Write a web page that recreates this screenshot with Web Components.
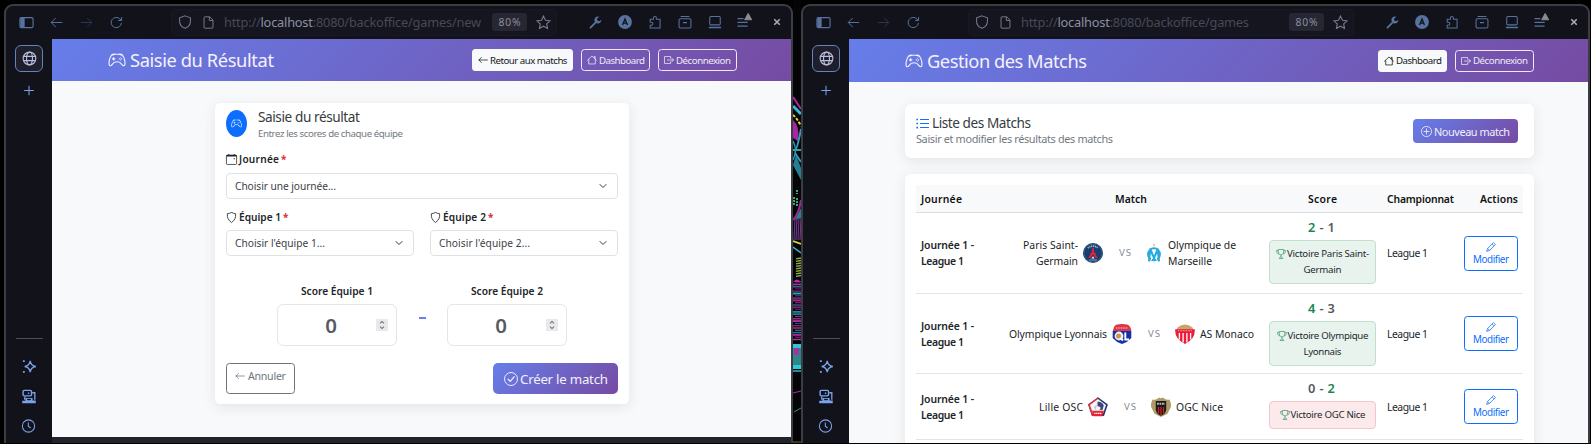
<!DOCTYPE html>
<html lang="fr">
<head>
<meta charset="utf-8">
<title>Backoffice – Matchs</title>
<style>
html,body{margin:0;height:444px;overflow:hidden;background:#000}
body{font-family:"Noto Sans",sans-serif;color:#212529}
</style>
</head>
<body>
<desk-top></desk-top>
<script>
const ICONS = {
controller:'<g fill="currentColor"><path d="M11.5 6.027a.5.5 0 1 1-1 0 .5.5 0 0 1 1 0m-1.5 1.5a.5.5 0 1 0 0-1 .5.5 0 0 0 0 1m2.5-.5a.5.5 0 1 1-1 0 .5.5 0 0 1 1 0m-1.5 1.5a.5.5 0 1 0 0-1 .5.5 0 0 0 0 1m-6.5-3h1v1h1v1h-1v1h-1v-1h-1v-1h1z"/><path d="M3.051 3.26a.5.5 0 0 1 .354-.613l1.932-.518a.5.5 0 0 1 .62.39c.655-.079 1.35-.117 2.043-.117.72 0 1.443.041 2.12.126a.5.5 0 0 1 .622-.399l1.932.518a.5.5 0 0 1 .306.729q.211.136.373.297c.408.408.78 1.05 1.095 1.772.32.733.599 1.591.805 2.466s.34 1.78.364 2.606c.024.816-.059 1.602-.328 2.21a1.42 1.42 0 0 1-1.445.83c-.636-.067-1.115-.394-1.513-.773-.245-.232-.496-.526-.739-.808-.126-.148-.25-.292-.368-.423-.728-.804-1.597-1.527-3.224-1.527s-2.496.723-3.224 1.527c-.119.131-.242.275-.368.423-.243.282-.494.575-.739.808-.398.38-.877.706-1.513.773a1.42 1.42 0 0 1-1.445-.83c-.27-.608-.352-1.395-.329-2.21.024-.826.16-1.73.365-2.606.206-.875.486-1.733.805-2.466.315-.722.687-1.364 1.094-1.772a2.3 2.3 0 0 1 .433-.335l-.028-.079zm2.036.412c-.877.185-1.469.443-1.733.708-.276.276-.587.783-.885 1.465a14 14 0 0 0-.748 2.295 12.4 12.4 0 0 0-.339 2.406c-.022.755.062 1.368.243 1.776a.42.42 0 0 0 .426.24c.327-.034.61-.199.929-.502.212-.202.4-.423.615-.674.133-.156.276-.323.44-.504C4.861 9.969 5.978 9.027 8 9.027s3.139.942 3.965 1.855c.164.181.307.348.44.504.214.251.403.472.615.674.318.303.601.468.929.503a.42.42 0 0 0 .426-.241c.18-.408.265-1.02.243-1.776a12.4 12.4 0 0 0-.339-2.406 14 14 0 0 0-.748-2.295c-.298-.682-.61-1.19-.885-1.465-.264-.265-.856-.523-1.733-.708-.85-.179-1.877-.27-2.913-.27s-2.063.091-2.913.27"/></g>',
sidebar:'<rect x="1" y="2.8" width="14" height="10.6" rx="1.5"/><path d="M2 3.4h3.4v9.4H2z" fill="currentColor"/>',
back:'<path d="M15 8H1.5M7 2.5 1.5 8 7 13.5"/>',
fwd:'<path d="M1 8h13.5M9 2.5 14.5 8 9 13.5"/>',
reload:'<path d="M14 8.5A6.3 6.3 0 1 1 12.3 3.7L14 5.3M14.3 1.2v4.3H10"/>',
shield:'<path d="M8 1 14.2 3.2V7c0 4-2.7 6.8-6.2 8.2C4.500 13.800 1.800 11 1.800 7V3.200z"/>',
doc:'<path d="M3.500 1h6l4 4v9q0 1-1 1h-9q-1 0-1-1V2q0-1 1-1zM9 1v4.500h4.500"/>',
star:'<path d="M8 1.200l2.100 4.400 4.800.6-3.500 3.300.9 4.800L8 12l-4.300 2.300.9-4.800L1.100 6.200l4.800-.6z"/>',
wrench:'<path d="M1.800 14.300 9.200 7" stroke-width="2.300" stroke-linecap="round"/><path d="M12.700.9a4.300 4.300 0 1 0 2.500 3.600L12.800 6.600 10.200 5.600 9.900 3.300z" fill="currentColor" stroke="none"/>',
account:'<circle cx="8" cy="8" r="7.900" fill="currentColor" stroke="none"/><path d="M5.200 11.500 8 4.500 10.800 11.500M6.200 9.200h3.600" stroke="#11121a" stroke-width="1.500"/>',
puzzle:'<path d="M2.500 4.800h3.700V3.300a1.700 1.700 0 0 1 3.400 0v1.500h4.200v10H2.500v-3h1.300a1.700 1.700 0 0 0 0-3.500H2.500z"/>',
archive:'<path d="M3 1.700h10" /><rect x="1.200" y="4.200" width="13.600" height="10.600" rx="1.600"/><path d="M5.700 8.700h4.600"/>',
laptop:'<rect x="2" y="1.800" width="12" height="9.500" rx="1.200"/><path d="M1 14.300h14" stroke-width="1.500"/>',
menu:'<path d="M-2 3.500H6M-2 8.500h13.500M-2 13.500h13.500" stroke-width="1.500"/><path d="M11.200-3.500 16 5H6.500z" fill="#8d8d92" stroke="#8d8d92" stroke-linejoin="round" transform="translate(1 0)"/>',
close:'<path d="M2.500 2.500 13.500 13.500M13.500 2.500 2.500 13.500" stroke-width="3.200"/>',
globe:'<circle cx="8" cy="8" r="6.800"/><ellipse cx="8" cy="8" rx="3.200" ry="6.800"/><path d="M1.500 5.700h13M1.500 10.300h13"/>',
plus:'<path d="M8 1v14M1 8h14" stroke-width="1.500"/>',
sparkle:'<path d="M9.300 2Q10 7.300 15.300 8 10 8.800 9.300 14 8.500 8.800 3.400 8 8.500 7.300 9.300 2z" stroke-width="1.400"/><path d="M1.500 1.200h2v2h-2zM1.500 12.700h2v2h-2z" fill="currentColor" stroke="none"/>',
devices:'<rect x="1.700" y="1.500" width="9" height="5.800" rx="1.200" stroke-width="1.500"/><path d="M7.500 3.700v1.500M11.500 4h2.700v7.500M3.500 8v3.500" stroke-width="1.400"/><path d="M4.200 9.500h7.600v2.800H15.200V15.300H.8v-2.800h3.400z" fill="currentColor" stroke="none"/><path d="M6 11.200h4" stroke="#11121a" stroke-width="1.500"/>',
clock:'<circle cx="8" cy="8" r="7"/><path d="M7.800 4v4.300l2.700 2"/>',
arrow:'<path d="M15 8H1.500M5.300 4 1.500 8l3.800 4" stroke-linecap="round" stroke-linejoin="round"/>',
house:'<path d="M.9 8.300 8 1.500l7.100 6.800M2.700 7v7.300h10.600V7M11.500 4.500V2.300h1.500V6" stroke-linejoin="round" stroke-linecap="round"/>',
logout:'<path d="M10.500 5V2.500H.8v11h9.700V11M5.500 8h9.700M12.300 5l3 3-3 3" stroke-linejoin="round" stroke-linecap="round"/>',
calendar:'<rect x=".6" y="1.600" width="14.800" height="13.600" rx="1.300"/><path d="M.6 2.500h14.800" stroke-width="2"/><path d="M4 0v2M12 0v2" stroke-width="1.300"/><path d="M11 6h1.800v1.600H11z" fill="currentColor" stroke="none"/>',
badge:'<path d="M8 .7Q11 2.200 14 2.500 15 10.500 8 15.300 1 10.500 2 2.500 5 2.200 8 .7z" stroke-width="1.200"/>',
chevron:'<path d="m2 5 6 6 6-6" stroke-linecap="round" stroke-linejoin="round" stroke-width="2"/>',
check:'<circle cx="8" cy="8" r="7.400"/><path d="m4.800 8.200 2.400 2.500 4.300-5.200" stroke-width="1.500" stroke-linecap="round"/>',
add:'<circle cx="8" cy="8" r="7.400"/><path d="M8 4.200v7.600M4.200 8h7.600" stroke-linecap="round"/>',
list:'<path d="M5 3h11M5 8h11M5 13h11" stroke-width="1.300"/><path d="M.5 3h2M.5 8h2M.5 13h2" stroke-width="2"/>',
trophy:'<path d="M3.500.8h9c0 5-1 8.700-4.500 8.700S3.500 5.800 3.500.8zM3.500 2.500H.8c0 3 1.200 5 3.800 5.500M12.500 2.500h2.700c0 3-1.200 5-3.800 5.500M8 9.500v3M5 15.200c0-1.500 1.500-2 3-2.700 1.500.7 3 1.200 3 2.700z"/>',
pencil:'<path d="M12 .9 15.100 4 5.500 13.600 1 15l1.400-4.500zM9.800 3.200l3 3M3 10.500l2.500 2.700" stroke-linejoin="round"/>',
spin:'<path d="m4.700 5.500 3.300-3 3.300 3M4.700 10.500l3.300 3 3.300-3" stroke-width="1.700"/>'
};
const LOGOS = {
psg:'<circle cx="10" cy="10" r="10" fill="#163f70"/><circle cx="10" cy="10" r="9" fill="none" stroke="#6f87a5" stroke-width=".4"/><path d="M4.800 5.200Q10 1 15.200 5.200" stroke="#a9b8cb" stroke-width="1.600" fill="none" stroke-dasharray="1.200 .7"/><path d="M9.300 5h1.400l.5 4.500 3.600 5.500h-2.500L10 11.200 7.700 15H5.200l3.600-5.500z" fill="#e5223a"/><path d="M7 10.500h6" stroke="#e5223a" stroke-width=".9"/><path d="M8.500 15.500 10 13.300l1.500 2.200z" fill="#fff"/><path d="M6 17h8" stroke="#a9b8cb" stroke-width=".8"/>',
om:'<path d="M10 .8v2.600M9.200 1.800h1.600" stroke="#d9b36b" stroke-width=".9"/><circle cx="10" cy="11.300" r="6" fill="none" stroke="#2aa9e0" stroke-width="1.900"/><path d="M6.300 5.500 5 18.300M13.700 5.500 15 18.300M6.800 7 10 15.500 13.200 7" fill="none" stroke="#2aa9e0" stroke-width="2.100"/><path d="M8 13.500 7.300 17M12 13.500 12.700 17" stroke="#fff" stroke-width="1.100"/>',
ol:'<path d="M.8 7Q1 3 4 .8q6-1.600 12 0Q19.200 3 19.300 7z" fill="#dc3648"/><path d="M4 4h12" stroke="#f5a5ac" stroke-width="1.300" stroke-dasharray="1 .7"/><path d="M.7 7h18.600v7Q16 18 10 20 4 18 .7 14z" fill="#1531a6"/><circle cx="7" cy="12" r="4.400" fill="#eef0f6"/><circle cx="6.500" cy="12" r="2.500" fill="#c9964a"/><path d="M8.500 14 11 16.500M13.300 8.500v7H17" stroke="#fff" stroke-width="1.900" fill="none"/>',
asm:'<path d="M2.500 3.500Q10-2.500 17.500 3.500L18.500 6H1.500z" fill="#c7a569"/><path d="M.2 5.300h19.600Q20.500 15 10 20-.5 15 .2 5.300z" fill="#ed1c3c"/><path d="M4.400 9v6.500M8.100 9v9.500M11.900 9v9.500M15.600 9v6.500" stroke="#fff" stroke-width="1.300"/><path d="M3 6.800h14" stroke="#f6a4ae" stroke-width="1.100" stroke-dasharray="1 .6"/>',
losc:'<path d="M10 .2 19.900 7.500 16 19H4L.1 7.500z" fill="#27306f"/><path d="M10 .2.1 7.500 4 19h5z" fill="#db2e3f"/><path d="M10 2 18 8 15.300 16H4.700L2 8z" fill="#f5f5f8"/><path d="M9.500 4.800Q13.500 4 15.800 8.300L14.500 13 11.300 12.800q1.700-1 1.200-2.500L9.500 9z" fill="#3b447f"/><path d="M6 10 9 7.500 8 12.500H7z" fill="#c3c8d7"/><path d="M4 13.700h12l-1.500 5.500h-9z" fill="#e42435"/><path d="M6.300 16.300h7.500" stroke="#fff" stroke-width="1.300" stroke-dasharray="1.300 .5"/>',
nice:'<path d="M1.500 2.500Q5 3.500 8 .5l2 .8 2-.8q3 3 6.500 2 2.800 6 .5 9.300l-2.500 5L10 20l-6.500-3.200-2.500-5Q-1.300 8.500 1.500 2.500z" fill="#b09b68"/><path d="M4.800 4h10.400v9Q14.500 17 10 18.700 5.500 17 4.800 13z" fill="#1b1919"/><path d="M7.500 10v6.500M10 10v8M12.500 10v6.500" stroke="#cc2030" stroke-width="1.300"/><path d="M6 6.800h8" stroke="#bcbcbc" stroke-width="2" stroke-dasharray="1.800 .7"/>'
};
class Base extends HTMLElement{
  connectedCallback(){ if(this.shadowRoot) return;
    this.attachShadow({mode:'open'}).innerHTML = `<style>*{box-sizing:border-box}${this.css()}</style>${this.html()}`; }
  a(n,d=''){ return this.getAttribute(n) ?? d; }
}
const def=(n,c)=>customElements.define(n,c);

def('ui-icon', class extends Base{
  css(){return `:host{display:block;flex:none;width:${this.a('size',14)}px;height:${this.a('size',14)}px}svg{display:block;width:100%;height:100%;overflow:visible}`}
  html(){return `<svg viewBox="0 0 16 16" fill="none" stroke="currentColor" stroke-width="${this.a('sw',1.2)}">${ICONS[this.a('name')].replace('<g ','<g stroke="none" ')}</svg>`}
});
def('team-logo', class extends Base{
  css(){return `:host{display:block;flex:none;width:20px;height:20px}svg{display:block}`}
  html(){return `<svg width="20" height="20" viewBox="0 0 20 20">${LOGOS[this.a('team')]}</svg>`}
});
def('ui-btn', class extends Base{
  css(){return `:host{display:flex;flex:none;align-items:center;box-sizing:border-box;border:1px solid transparent;border-radius:3.500px;font-size:9.700px}
  :host([kind=light]){background:#f8f9fa;color:#14171a}
  :host([kind=outline]){border-color:#efeaf6;color:#efeaf6}
  :host([kind=primary]){border:0;border-radius:5px;background:linear-gradient(135deg,#667eea,#764ba2);color:#f3f0fa}
  :host([kind=gray]){border-color:#6c757d;color:#6c757d}
  :host([kind=blue]){border-color:#0d6efd;color:#0d6efd;flex-direction:column}`}
  html(){return '<slot></slot>'}
});
def('page-header', class extends Base{
  css(){return `:host{display:flex;align-items:center;height:${this.a('h')}px;background:linear-gradient(135deg,#667eea,#764ba2);color:#f3f2fc;padding-left:${this.a('pl')}px;padding-right:${this.a('pr')}px}
  .t{display:flex;align-items:center;font-size:18.300px;line-height:24px;gap:4px;flex:1}.b{display:flex;gap:8px}`}
  html(){return '<div class="t"><ui-icon name="controller" size="18"></ui-icon><slot name="title"></slot></div><div class="b"><slot></slot></div>'}
});
def('browser-window', class extends Base{
  css(){return `:host{display:grid;grid-template:33px 404px/46px 1fr;width:789px;height:439px;box-sizing:border-box;border:2px solid #3b3d43;border-bottom:0;border-radius:9px 9px 0 0;background:#11121a;overflow:hidden}
  .bar{grid-column:1/3;display:flex;align-items:center;padding:0 0 1px 5px;color:#58729f}
  .c{flex:none;width:30px;display:flex;justify-content:center}
  .url{flex:none;margin:0 23px 0 40px;width:386px;height:27px;border-radius:4px;background:#14151e;border:1px solid #181923;display:flex;align-items:center;color:#777a8c;padding-left:6px;font-size:12.800px}
  .url .p{margin-left:9px;flex:none;color:#474957}.url b{font-weight:400;color:#8d90a3}
  .z{width:35px;height:18px;border-radius:3px;background:#262732;color:#8b8ea0;font-size:10.300px;line-height:18px;display:flex;justify-content:center}
  .side{display:flex;flex-direction:column;align-items:center;color:#7ba2ea}.side>ui-icon{transform:translateX(-.5px)}
  .tile{width:28px;height:27px;margin-top:6px;border:1px solid #6283bd;border-radius:6px;background:#1e1f2b;color:#b9bede;display:flex;align-items:center;justify-content:center}
  .hr{width:27px;height:1px;background:#4b4e61;margin:242px 0 20px}
  .page{background:#f8f9fa;overflow:hidden;height:404px}`}
  html(){const i=(n,s,x='')=>`<span class="c" style="${x}"><ui-icon name="${n}" size="${s}"></ui-icon></span>`;
  return `<div class="bar">${i('sidebar',15)}${i('back',13)}${i('fwd',13,'color:#2b3650')}${i('reload',13)}
  <div class="url"><ui-icon name="shield" size="14"></ui-icon><ui-icon name="doc" size="13" style="margin-left:10px"></ui-icon><fit-text class="p" w="${this.a('urlw')}">http://<b>localhost</b>:8080${this.a('path')}</fit-text><span class="z" style="margin-left:auto"><fit-text w="22">80%</fit-text></span><ui-icon name="star" size="15" style="margin:0 5px 0 9px"></ui-icon></div>
  ${i('wrench',13)}${i('account',14)}${i('puzzle',14)}${i('archive',14)}${i('laptop',14)}${i('menu',12)}${i('close',8,'width:26px;margin-left:4px;color:#a9abba')}</div>
  <div class="side"><div class="tile"><ui-icon name="globe" size="15"></ui-icon></div><ui-icon name="plus" size="11" style="margin-top:13px"></ui-icon><div class="hr"></div><ui-icon name="sparkle" size="15"></ui-icon><ui-icon name="devices" size="15" style="margin:15px 0"></ui-icon><ui-icon name="clock" size="14"></ui-icon></div>
  <div class="page"><slot></slot></div>`}
});
def('wall-paper', class extends Base{
  css(){return `:host{display:block;width:8px;height:444px;background:#050507}svg{display:block}`}
  html(){
    let s='';
    const cols=['#a22a9b','#26758e','#2fa3c4','#7a2478','#35627e','#b030a4'];
    for(let y=282,k=0;y<340;y+=2.3,k++) s+=`<path d="M${k%3===0?2:0} ${y}H8" stroke="${cols[(k*5+(k>>2))%6]}" stroke-width="${.9+(k%3)*.5}"/>`;
    for(let y=258;y<276;y+=2.500) s+=`<path d="M3 ${y+.8}L8 ${y}" stroke="#8fae3f" stroke-width="1.300"/>`;
    for(let x=1;x<8;x+=2) s+=`<path d="M${x+1} 218L${x} 240" stroke="${x%4===1?'#5a3d8c':'#8b2d8c'}" stroke-width="1.200"/>`;
    return `<svg width="8" height="444" viewBox="0 0 8 444" fill="none">
    <path d="M0 97 8 109" stroke="#b12ba5" stroke-width="2"/><path d="M0 106 8 114" stroke="#35bcd3" stroke-width="3"/><path d="M0 115Q4 118 8 126" stroke="#e4df38" stroke-width="2" stroke-dasharray="3 1.500"/><path d="M0 120Q7 126 5 141L0 138z" fill="#a826a0"/><path d="M8 129Q4 150 2 150M0 150h8M2 153 8 162" stroke="#2f9fb8" stroke-width="2"/><path d="M0 141Q5 150 0 160" stroke="#279fb7" stroke-width="1.500"/><path d="M3 155 8 168V180L0 165z" fill="#247f95"/>
    <path d="M4 190v4M1 197v8M4 198v8" stroke="#3ba777" stroke-width="2" stroke-dasharray="2 1"/><path d="M8 200Q6 214 0 220" stroke="#a0299a" stroke-width="2"/><path d="M8 208V218L2 220z" fill="#2b8385"/>${s}
    <path d="M0 241l8 3" stroke="#d7d63b" stroke-width="1.800"/><path d="M0 247 8 253" stroke="#34b8ca" stroke-width="1.500"/><path d="M0 282Q4 277 8 282z" fill="#b62aae"/>
    <path d="M0 344h8v21H0z" fill="#2a8888"/><path d="M0 344h8v4H0zM0 365h8v4H0z" fill="#31c5da"/><path d="M1 348h5v7H1z" fill="#a233a0"/><path d="M0 371h8" stroke="#2ba9c0" stroke-width="1.600"/><path d="M0 393 8 391" stroke="#ad2ba6"/><path d="M1 412 8 408" stroke="#3e9172"/><path d="M0 442h8" stroke="#6b6b24"/></svg>`}
});
def('form-select', class extends Base{
  css(){return `:host{display:flex;align-items:center;justify-content:space-between;height:26px;box-sizing:border-box;border:1px solid #dee2e6;border-radius:4px;background:#fff;padding:0 10px 0 8px;font-size:10.200px;color:#3d4247}`}
  html(){return '<slot></slot><ui-icon name="chevron" size="8" style="color:#343a40"></ui-icon>'}
});
def('field-label', class extends Base{
  css(){return `:host{display:flex;align-items:center;height:16px;font-size:10.100px;font-weight:600;gap:2px}i{font-style:normal;font-weight:700;font-size:10px;color:#e0283c}`}
  html(){return `<ui-icon name="${this.a('icon')}" size="11" sw="1.100"></ui-icon><slot></slot><i>*</i>`}
});
def('score-field', class extends Base{
  css(){return `:host{display:block;width:120px}.l{display:flex;justify-content:center;font-size:10.200px;font-weight:600;line-height:16px;margin-bottom:5px}
  .b{height:42px;border:1px solid #e3e6ea;border-radius:6px;display:flex;align-items:center;padding-right:8px}.n{flex:1;text-align:center;font-size:20.500px;font-weight:600;color:#575b5f;line-height:40px;padding-left:8px}
  .s{width:12px;height:12px;background:#e9e9ed;color:#777;display:flex;align-items:center;justify-content:center;margin-top:-1px}`}
  html(){return `<div class="l"><fit-text w="72">${this.a('label')}</fit-text></div><div class="b"><span class="n">0</span><span class="s"><ui-icon name="spin" size="10"></ui-icon></span></div>`}
});
def('result-form', class extends Base{
  css(){return `:host{display:block;box-sizing:border-box;width:414px;height:301px;margin:22px 0 0 163px;padding:7px 11px 0;background:#fff;border-radius:5px;box-shadow:0 3px 14px rgba(0,0,0,.09)}
  .h{display:flex;height:39px}.o{width:21px;height:27px;border-radius:50%;background:#0d6efd;color:#dbe9ff;display:flex;align-items:center;justify-content:center;margin-right:11px}
  .t{font-size:13.600px;line-height:16px;color:#363b40;display:flex;margin-top:-1px}.u{font-size:9.700px;line-height:15px;color:#73797f;display:flex;margin-top:1px}
  .two{display:grid;grid-template-columns:1fr 1fr;gap:16px;margin-top:10px}
  form-select{margin-top:5px}
  .sc{display:flex;padding-left:51px;margin-top:27px}.d{width:50px;display:flex;justify-content:center;padding:34px 0 0}.d:after{content:"";width:7px;height:2px;background:#6b80ea}
  .f{display:flex;justify-content:space-between;margin-top:17px;height:31px}`}
  html(){return `<div class="h"><span class="o"><ui-icon name="controller" size="11"></ui-icon></span><div><div class="t"><fit-text w="102">Saisie du résultat</fit-text></div><div class="u"><fit-text w="145">Entrez les scores de chaque équipe</fit-text></div></div></div>
  <div style="height:2px"></div><field-label icon="calendar"><fit-text w="40">Journée</fit-text></field-label><form-select style="margin-top:6px"><fit-text w="101">Choisir une journée...</fit-text></form-select>
  <div class="two"><div><field-label icon="badge"><fit-text w="42">Équipe 1</fit-text></field-label><form-select><fit-text w="90">Choisir l'équipe 1...</fit-text></form-select></div><div><field-label icon="badge"><fit-text w="43">Équipe 2</fit-text></field-label><form-select><fit-text w="91">Choisir l'équipe 2...</fit-text></form-select></div></div>
  <div class="sc"><score-field label="Score Équipe 1"></score-field><div class="d"></div><score-field label="Score Équipe 2"></score-field></div>
  <div class="f"><ui-btn kind="gray" style="padding:0 8px 6px;width:69px;font-size:10.600px"><ui-icon name="arrow" size="10"></ui-icon><fit-text w="38" style="margin-left:3px">Annuler</fit-text></ui-btn>
  <ui-btn kind="primary" style="width:125px;padding-left:11px;font-size:13.300px"><ui-icon name="check" size="14" sw="1.100"></ui-icon><fit-text w="88" style="margin-left:2px">Créer le match</fit-text></ui-btn></div>`}
});
def('match-row', class extends Base{
  css(){return `:host{display:flex;box-sizing:border-box;height:${this.a('h')}px;border-bottom:1px solid #e1e4e8;font-size:10.400px;line-height:16px}
  .j{width:93px;padding-left:5px;font-weight:600;display:flex;flex-direction:column;justify-content:center}
  .m{width:260px;display:flex;align-items:center}.m .x{display:flex;flex-direction:column}.m .e{align-items:flex-end}
  .vs{font-size:9.700px;color:#868d94}
  .s{width:107px;padding-top:6px}.n{display:flex;justify-content:center;gap:4px;font-size:12.800px;line-height:17px;font-weight:600;color:#565b60;padding-right:2px}.w{color:#198754}
  .v{margin-top:4px;height:${this.a('vh')}px;border:1px solid #c1dfce;background:#e8f3ee;border-radius:4px;display:flex;flex-direction:column;align-items:center;justify-content:center;font-size:9.700px;color:#24292d}
  .v.r{background:#fbe9eb;border-color:#f4c5ca}.v div{display:flex;align-items:center;gap:1px}.v ui-icon{color:#3d9b6c}
  .l{width:88px;padding-left:11px;display:flex;align-items:center}.q{display:flex;align-items:center}`}
  html(){const d=MATCHES[this.a('i')],L=(ls)=>ls.map(([t,w])=>`<fit-text w="${w}">${t}</fit-text>`).join('');
  return `<div class="j"><fit-text w="53">Journée 1 -</fit-text><fit-text w="43">League 1</fit-text></div>
  <div class="m"><div class="x e" style="width:${d.aw}px">${L(d.a)}</div><team-logo team="${d.la}" style="margin-left:5px"></team-logo><fit-text class="vs" w="12" style="margin:0 ${d.vr}px 0 16px">VS</fit-text><team-logo team="${d.lb}"></team-logo><div class="x" style="margin-left:${d.bm}px">${L(d.b)}</div></div>
  <div class="s"><div class="n"><span class="${d.win?'':'w'}">${d.s[0]}</span><span>-</span><span class="${d.win?'w':''}">${d.s[1]}</span></div>
  <div class="v ${d.win?'r':''}"><div><ui-icon name="trophy" size="10"></ui-icon>${L([d.v[0]])}</div>${L(d.v.slice(1))}</div></div>
  <div class="l"><fit-text w="41">League 1</fit-text></div>
  <div class="q"><ui-btn kind="blue" style="width:54px;height:35px;padding-top:5px;font-size:9.900px"><ui-icon name="pencil" size="10"></ui-icon><fit-text w="36" style="line-height:13px;margin-top:1px">Modifier</fit-text></ui-btn></div>`}
});
const MATCHES=[
{a:[['Paris Saint-',55],['Germain',42]],aw:69,la:'psg',lb:'om',vr:13,bm:4,b:[['Olympique de',68],['Marseille',44]],s:[2,1],win:0,v:[['Victoire Paris Saint-',82],['Germain',38]]},
{a:[['Olympique Lyonnais',98]],aw:98,la:'ol',lb:'asm',vr:15,bm:5,b:[['AS Monaco',54]],s:[4,3],win:0,v:[['Victoire Olympique',81],['Lyonnais',38]]},
{a:[['Lille OSC',44]],aw:74,la:'losc',lb:'nice',vr:15,bm:5,b:[['OGC Nice',47]],s:[0,2],win:1,v:[['Victoire OGC Nice',75]]}];
def('match-list', class extends Base{
  css(){return `:host{display:block;padding:0 0 0 56px}.c{width:629px;background:#fff;border-radius:6px;box-shadow:0 3px 14px rgba(0,0,0,.085)}
  .a{height:54px;margin-top:22px;padding:11px 16px 0 11px;display:flex;justify-content:space-between}
  .t{display:flex;align-items:center;gap:3px;font-size:13.600px;line-height:16px;color:#363b40}.t ui-icon{color:#0d6efd}.u{font-size:10.900px;line-height:15px;color:#73797f;display:flex}
  .b{height:290px;margin-top:16px;padding:11px 11px 0}
  .th{height:28px;background:#f8f9fa;border-bottom:1px solid #d9dde2;display:flex;align-items:center;font-size:10.400px;font-weight:600;color:#111}`}
  html(){return `<div class="c a"><div><div class="t"><ui-icon name="list" size="13"></ui-icon><fit-text w="99">Liste des Matchs</fit-text></div><div class="u"><fit-text w="197">Saisir et modifier les résultats des matchs</fit-text></div></div>
  <ui-btn kind="primary" style="width:105px;height:24px;margin-top:4px;padding-left:8px;font-size:10.900px;border-radius:4px"><ui-icon name="add" size="11"></ui-icon><fit-text w="76" style="margin-left:2px">Nouveau match</fit-text></ui-btn></div>
  <div class="c b"><div class="th"><fit-text w="41" style="margin-left:5px">Journée</fit-text><fit-text w="32" style="margin-left:153px">Match</fit-text><fit-text w="29" style="margin-left:161px">Score</fit-text><fit-text w="67" style="margin-left:50px">Championnat</fit-text><fit-text w="38" style="margin-left:26px">Actions</fit-text></div>
  <match-row i="0" h="81" vh="44"></match-row><match-row i="1" h="80" vh="45"></match-row><match-row i="2" h="66" vh="28"></match-row></div>`}
});
def('desk-top', class extends Base{
  css(){return `:host{display:grid;grid-template-columns:789px 8px 789px;padding-left:4px;width:1591px;height:444px;box-sizing:border-box;background:#000;overflow:hidden}
  browser-window{margin-top:4px}.foot{height:6px;background:#212529;margin-top:33px}`}
  html(){const b=(k,ic,t,w,W)=>`<ui-btn kind="${k}" style="width:${W}px;height:22px;padding-left:5px"><ui-icon name="${ic}" size="10"></ui-icon><fit-text w="${w}" style="margin-left:2px">${t}</fit-text></ui-btn>`;
  return `<browser-window path="/backoffice/games/new" urlw="257"><page-header h="42" pl="56" pr="54"><fit-text slot="title" w="144">Saisie du Résultat</fit-text>${b('light','arrow','Retour aux matchs',77.5,101)}${b('outline','house','Dashboard',46,69)}${b('outline','logout','Déconnexion',55,79)}</page-header><result-form></result-form><div class="foot"></div></browser-window>
  <wall-paper></wall-paper>
  <browser-window path="/backoffice/games" urlw="228"><page-header h="43" pl="56" pr="54"><fit-text slot="title" w="160">Gestion des Matchs</fit-text>${b('light','house','Dashboard',46,69)}${b('outline','logout','Déconnexion',55,79)}</page-header><match-list></match-list></browser-window>`}
});
/* Text set to an exact advance width; registered last so that every parent is already laid out. */
def('fit-text', class extends Base{
  css(){return ':host{display:block;flex:none;white-space:nowrap}span{display:inline-block}'}
  html(){return '<span><slot></slot></span>'}
  connectedCallback(){ super.connectedCallback();
    const s=this.shadowRoot.querySelector('span'), w=+this.a('w'), n=this.textContent.length;
    const m=s.getBoundingClientRect().width;
    if(m&&w&&n>1){ s.style.letterSpacing=((w-m)/(n-1)).toFixed(3)+'px'; this.style.width=w+'px'; }
  }
});
</script>
</body>
</html>
